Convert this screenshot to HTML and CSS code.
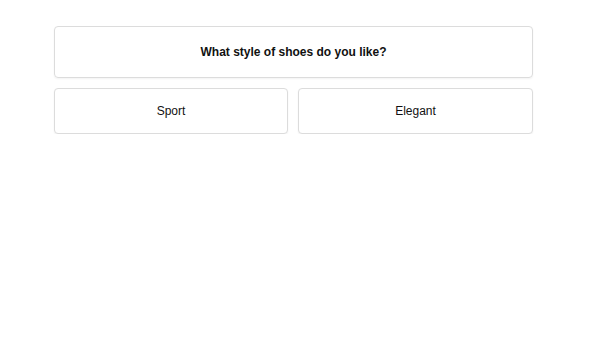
FILE: index.html
```html
<!DOCTYPE html>
<html lang="en">
<head>
    <meta charset="UTF-8">
    <title>Shoe Quiz</title>
    <link rel="stylesheet" href="styles.css">
</head>
<body>
    <!-- Quiz -->
    <div class="quiz">
        <div class="question">What style of shoes do you like?</div>
        <div class="options">
            <button class="option">Sport</button>
            <button class="option">Elegant</button>
        </div>
    </div>
</body>
</html>
```
FILE: styles.css
```css
* {
    margin: 0;
    padding: 0;
    box-sizing: border-box;
}
body {
    font-family: 'Liberation Sans', Arial, sans-serif;
    background: #fff;
    color: #111;
    font-size: 12px;
}
.quiz {
    width: 479px;
    margin: 26px 0 0 54px;
}
.question {
    height: 52px;
    border: 1px solid #dcdcdc;
    border-radius: 4px;
    box-shadow: 0 1px 2px rgba(0,0,0,0.05);
    display: flex;
    align-items: center;
    justify-content: center;
    font-weight: bold;
    font-size: 12px;
}
.options {
    display: grid;
    grid-template-columns: 234px 1fr;
    gap: 10px;
    margin-top: 10px;
}
.option {
    height: 46px;
    background: #fff;
    border: 1px solid #dcdcdc;
    border-radius: 4px;
    box-shadow: 0 1px 2px rgba(0,0,0,0.05);
    font-family: inherit;
    font-size: 12px;
    color: #111;
    cursor: pointer;
}
```
